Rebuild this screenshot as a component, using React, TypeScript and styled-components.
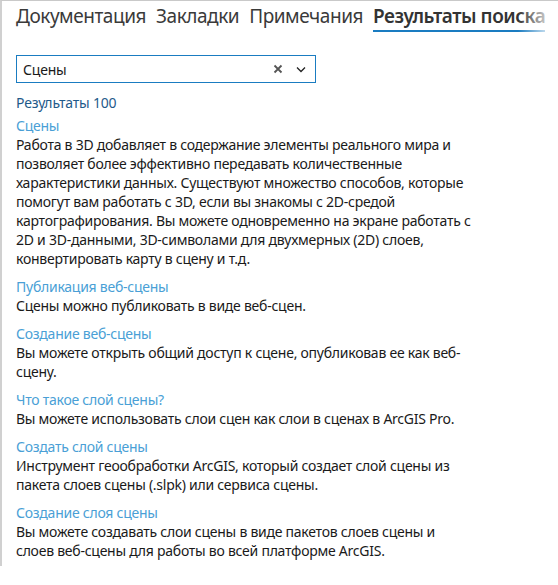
import React from 'react';
import styled, { createGlobalStyle } from 'styled-components';

const Global = createGlobalStyle`
  html, body {
    margin: 0;
    padding: 0;
    background: #ffffff;
  }
  body {
    font-family: "Noto Sans", "Open Sans", sans-serif;
  }
`;

const Pane = styled.div`
  width: 558px;
  height: 566px;
  box-sizing: border-box;
  border-top: 1px solid #c9c9c9;
  border-left: 2px solid #d0d0d0;
  overflow: hidden;
  background: #fff;
`;

const TabBar = styled.div`
  position: relative;
  display: flex;
  gap: 10px;
  padding: 0 0 0 14px;
  height: 33px;
  white-space: nowrap;
  overflow: hidden;

  &::after {
    content: '';
    position: absolute;
    top: 0;
    right: 0;
    width: 40px;
    height: 100%;
    background: linear-gradient(to right, rgba(255, 255, 255, 0), #fff 95%);
  }
`;

const Tab = styled.div<{ $active?: boolean }>`
  flex-shrink: 0;
  font-size: 19px;
  line-height: 27px;
  height: 27px;
  padding-top: 2px;
  color: ${p => (p.$active ? '#333' : '#3a3a3a')};
  font-weight: ${p => (p.$active ? 600 : 400)};
  border-bottom: 2px solid ${p => (p.$active ? '#1a7cc1' : 'transparent')};
  letter-spacing: -0.45px;
`;

const Body = styled.div`
  padding: 21px 0 0 14px;
`;

const SearchBox = styled.div`
  width: 300px;
  height: 28px;
  box-sizing: border-box;
  border: 1px solid #1a7cc1;
  display: flex;
  align-items: center;
  padding: 0 6px 0 6px;
  font-size: 14px;
  color: #1a1a1a;
`;

const SearchText = styled.div`
  flex: 1;
  letter-spacing: -0.2px;
`;

const IconBtn = styled.span`
  display: inline-flex;
  align-items: center;
  justify-content: center;
  width: 16px;
  margin-left: 7px;
`;

const Count = styled.div`
  margin-top: 10px;
  font-size: 14px;
  line-height: 19px;
  color: #1f5a8a;
  letter-spacing: -0.2px;
`;

const List = styled.div`
  margin-top: 4px;
  width: 456px;
  display: flex;
  flex-direction: column;
  gap: 9px;
`;

const Item = styled.div`
  font-size: 14px;
  line-height: 19px;
  letter-spacing: -0.25px;
`;

const Title = styled.div`
  color: #4a9fd6;
`;

const Text = styled.div`
  color: #1a1a1a;
`;

const results = [
  {
    title: 'Сцены',
    text: 'Работа в 3D добавляет в содержание элементы реального мира и позволяет более эффективно передавать количественные характеристики данных. Существуют множество способов, которые помогут вам работать с 3D, если вы знакомы с 2D-средой картографирования. Вы можете одновременно на экране работать с 2D и 3D-данными, 3D-символами для двухмерных (2D) слоев, конвертировать карту в сцену и т.д.',
  },
  { title: 'Публикация веб-сцены', text: 'Сцены можно публиковать в виде веб-сцен.' },
  { title: 'Создание веб-сцены', text: 'Вы можете открыть общий доступ к сцене, опубликовав ее как веб-сцену.' },
  { title: 'Что такое слой сцены?', text: 'Вы можете использовать слои сцен как слои в сценах в ArcGIS Pro.' },
  {
    title: 'Создать слой сцены',
    text: 'Инструмент геообработки ArcGIS, который создает слой сцены из пакета слоев сцены (.slpk) или сервиса сцены.',
  },
  {
    title: 'Создание слоя сцены',
    text: 'Вы можете создавать слои сцены в виде пакетов слоев сцены и слоев веб-сцены для работы во всей платформе ArcGIS.',
  },
];

const App = () => {
  return (
    <>
      <Global />
      <Pane>
        <TabBar>
          <Tab>Документация</Tab>
          <Tab>Закладки</Tab>
          <Tab>Примечания</Tab>
          <Tab $active>Результаты поиска</Tab>
        </TabBar>
        <Body>
          <SearchBox>
            <SearchText>Сцены</SearchText>
            <IconBtn>
              <svg width="10" height="10" viewBox="0 0 10 10">
                <path d="M1.5 1.5 L8.5 8.5 M8.5 1.5 L1.5 8.5" stroke="#555" strokeWidth="1.8" />
              </svg>
            </IconBtn>
            <IconBtn>
              <svg width="10" height="7" viewBox="0 0 10 7">
                <path d="M1 1.5 L5 5.5 L9 1.5" stroke="#222" strokeWidth="1.3" fill="none" />
              </svg>
            </IconBtn>
          </SearchBox>
          <Count>Результаты 100</Count>
          <List>
            {results.map((r, i) => (
              <Item key={i}>
                <Title>{r.title}</Title>
                <Text>{r.text}</Text>
              </Item>
            ))}
          </List>
        </Body>
      </Pane>
    </>
  );
};

export default App;
